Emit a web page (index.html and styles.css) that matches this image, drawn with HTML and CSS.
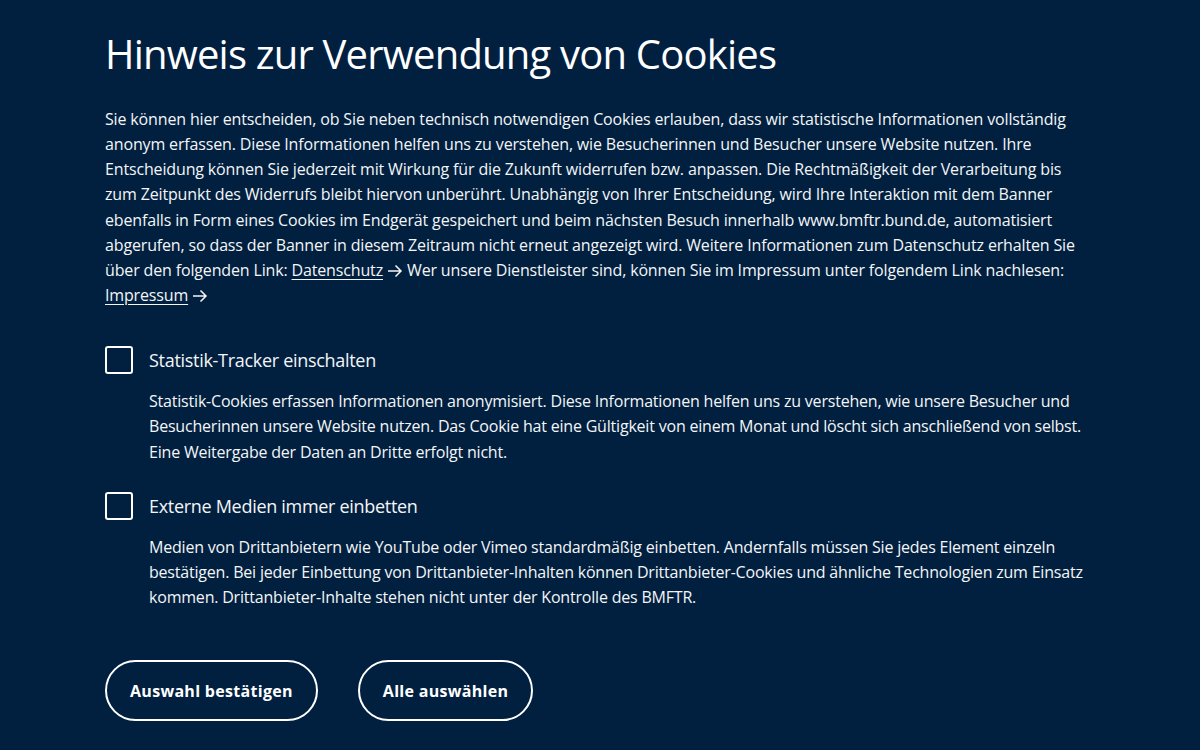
FILE: index.html
```html
<!DOCTYPE html>
<html lang="de">
<head>
<meta charset="utf-8">
<title>Hinweis zur Verwendung von Cookies</title>
<link rel="stylesheet" href="styles.css">
</head>
<body>
<div class="banner">
  <h1 class="title">Hinweis zur Verwendung von Cookies</h1>
  <p class="intro">Sie können hier entscheiden, ob Sie neben technisch notwendigen Cookies erlauben, dass wir statistische Informationen vollständig anonym erfassen. Diese Informationen helfen uns zu verstehen, wie Besucherinnen und Besucher unsere Website nutzen. Ihre Entscheidung können Sie jederzeit mit Wirkung für die Zukunft widerrufen bzw. anpassen. Die Rechtmäßigkeit der Verarbeitung bis zum Zeitpunkt des Widerrufs bleibt hiervon unberührt. Unabhängig von Ihrer Entscheidung, wird Ihre Interaktion mit dem Banner ebenfalls in Form eines Cookies im Endgerät gespeichert und beim nächsten Besuch innerhalb www.bmftr.bund.de, automatisiert abgerufen, so dass der Banner in diesem Zeitraum nicht erneut angezeigt wird. Weitere Informationen zum Datenschutz erhalten Sie über den folgenden Link: <a class="link" href="#">Datenschutz</a><svg class="arrow" viewBox="0 0 16 16" width="16" height="16"><path d="M1 8h13.5M8.5 2.5 14 8l-5.5 5.5" fill="none" stroke="currentColor" stroke-width="1.5"/></svg> Wer unsere Dienstleister sind, können Sie im Impressum unter folgendem Link nachlesen: <a class="link" href="#">Impressum</a><svg class="arrow" viewBox="0 0 16 16" width="16" height="16"><path d="M1 8h13.5M8.5 2.5 14 8l-5.5 5.5" fill="none" stroke="currentColor" stroke-width="1.5"/></svg></p>

  <div class="option">
    <label class="option-head"><span class="box"></span><span class="option-label">Statistik-Tracker einschalten</span></label>
    <p class="option-desc">Statistik-Cookies erfassen Informationen anonymisiert. Diese Informationen helfen uns zu verstehen, wie unsere Besucher und Besucherinnen unsere Website nutzen. Das Cookie hat eine Gültigkeit von einem Monat und löscht sich anschließend von selbst. Eine Weitergabe der Daten an Dritte erfolgt nicht.</p>
  </div>

  <div class="option">
    <label class="option-head"><span class="box"></span><span class="option-label">Externe Medien immer einbetten</span></label>
    <p class="option-desc">Medien von Drittanbietern wie YouTube oder Vimeo standardmäßig einbetten. Andernfalls müssen Sie jedes Element einzeln bestätigen. Bei jeder Einbettung von Drittanbieter-Inhalten können Drittanbieter-Cookies und ähnliche Technologien zum Einsatz kommen. Drittanbieter-Inhalte stehen nicht unter der Kontrolle des BMFTR.</p>
  </div>

  <div class="actions">
    <button class="btn">Auswahl bestätigen</button>
    <button class="btn">Alle auswählen</button>
  </div>
</div>
</body>
</html>
```
FILE: styles.css
```css
html, body {
  margin: 0;
  padding: 0;
  background: #01203f;
}
body {
  color: #f4f5f7;
  font-family: "Open Sans", "Noto Sans", sans-serif;
  height: 750px;
  overflow: hidden;
}
.banner {
  width: 990px;
  margin-left: 105px;
  padding-top: 27px;
}
.title {
  margin: 0;
  font-size: 40px;
  font-weight: 400;
  line-height: 54px;
  letter-spacing: -0.8px;
  color: #ffffff;
}
.intro {
  margin: 26px 0 0;
  font-size: 16px;
  line-height: 25.15px;
  letter-spacing: -0.15px;
}
.link {
  color: inherit;
  text-decoration: underline;
  text-underline-offset: 3px;
  text-decoration-thickness: 1px;
}
.arrow {
  vertical-align: -3px;
  margin-left: 4px;
}
.option {
  margin-top: 38px;
}
.option + .option {
  margin-top: 27px;
}
.option-head {
  display: flex;
  align-items: center;
  gap: 16px;
}
.box {
  width: 24px;
  height: 24px;
  border: 2px solid #ffffff;
  border-radius: 3px;
  flex: none;
}
.option-label {
  font-size: 18px;
  line-height: 28px;
  letter-spacing: -0.3px;
}
.option-desc {
  margin: 15px 0 0 44px;
  font-size: 16px;
  line-height: 25.15px;
  letter-spacing: -0.2px;
}
.actions {
  display: flex;
  gap: 40px;
  margin-top: 50px;
}
.btn {
  height: 61px;
  padding: 0 23px;
  border: 2px solid #ffffff;
  border-radius: 31px;
  background: transparent;
  color: #ffffff;
  font-family: "Open Sans", "Noto Sans", sans-serif;
  font-size: 16px;
  font-weight: 700;
  letter-spacing: 0.3px;
}
```
